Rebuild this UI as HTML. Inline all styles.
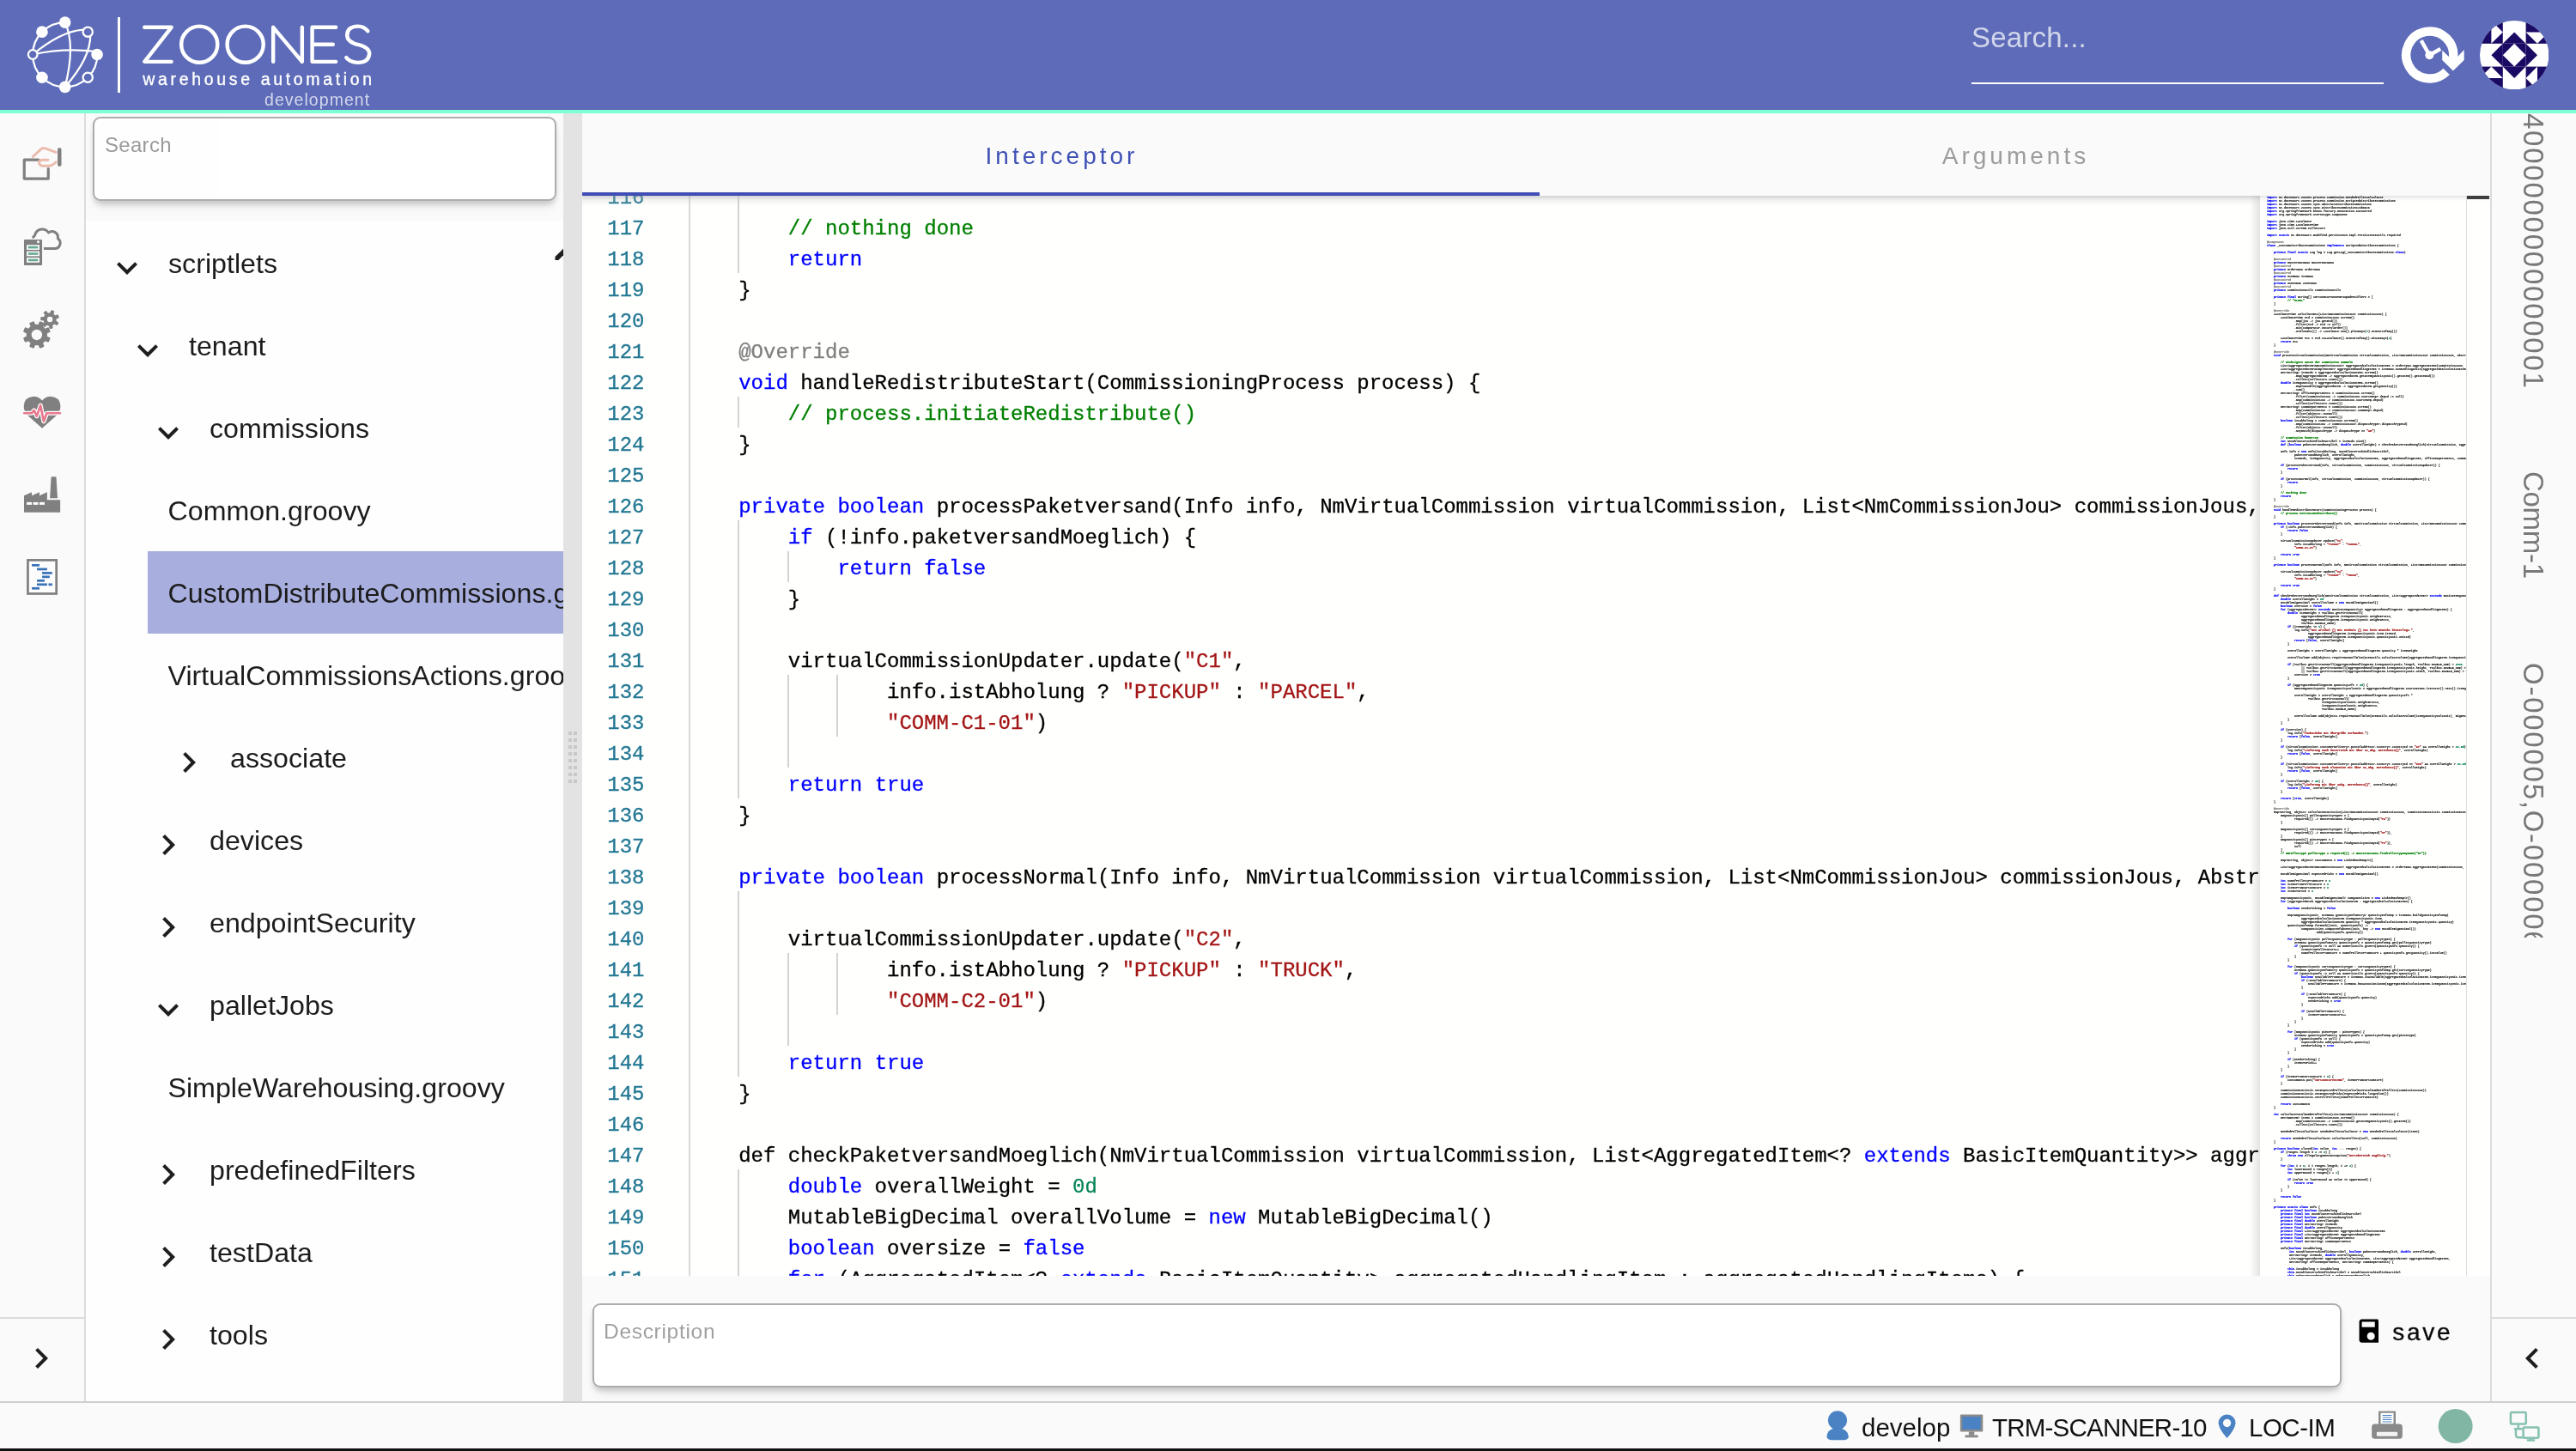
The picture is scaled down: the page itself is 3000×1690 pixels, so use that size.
<!DOCTYPE html>
<html><head><meta charset="utf-8"><title>Zoones</title>
<style>
*{box-sizing:border-box;margin:0;padding:0}
html,body{width:3000px;height:1690px;overflow:hidden;background:#fafafa;font-family:"Liberation Sans",sans-serif}
.abs{position:absolute}
#root{position:absolute;left:0;top:0;width:3000px;height:1690px;overflow:hidden;opacity:.9999;will-change:transform}
#hdr{position:absolute;left:0;top:0;width:3000px;height:128px;background:#5d6bb8}
#teal{position:absolute;left:0;top:128px;width:3000px;height:4px;background:#7fffd4}
#iconbar{position:absolute;left:0;top:132px;width:100px;height:1500px;background:#fafafa;border-right:2px solid #dcdcdc}
#treepane{position:absolute;left:100px;top:132px;width:556px;height:1500px;background:#fafafa;overflow:hidden}
#treewhite{position:absolute;left:0;top:125px;width:556px;height:1375px;background:#fefefe}
#tsearch{position:absolute;left:8px;top:4px;width:540px;height:98px;background:#fff;border:2px solid #adadad;border-radius:9px;box-shadow:0 4px 5px rgba(0,0,0,.10),0 9px 12px -4px rgba(0,0,0,.13)}
#tsearch span{position:absolute;left:12px;top:17px;font-size:24px;color:#9a9a9a;letter-spacing:.3px}
.trow{position:absolute;height:96px;width:700px}
.trow.leaf.sel{background:#a8afde}
.tt{position:absolute;top:25px;font-size:32.2px;line-height:48px;color:#1c1c1c;white-space:nowrap}
.chev{position:absolute;top:30px;width:48px;height:48px;fill:#1e1e1e}
#split{position:absolute;left:656px;top:132px;width:22px;height:1500px;background:#e3e3e3}
#split i{position:absolute;width:4px;height:4px;background:#c8c8c8}
#main{position:absolute;left:678px;top:132px;width:2222px;height:1500px;background:#fafafa;overflow:hidden}
#tabs{position:absolute;left:0;top:0;width:2222px;height:96px;background:#fafafb;box-shadow:0 2px 5px rgba(0,0,0,.13);z-index:3}
.tab{position:absolute;top:0;height:96px;width:1111px;text-align:center;font-size:28px;letter-spacing:4px;line-height:99px;padding-left:2px}
#tab1{left:0;width:1115px;color:#3f51b5;border-bottom:4px solid #3f4db5}
#tab2{left:1115px;width:1107px;color:#9c9c9c}
#editor{position:absolute;left:0;top:96px;width:2222px;height:1258px;background:#fffffe;overflow:hidden}
.ln{position:absolute;left:0;width:72.5px;text-align:right;font:24px/36px "Liberation Mono",monospace;color:#237893;-webkit-text-stroke:.3px}
.cl{position:absolute;white-space:pre;font:24px/36px "Liberation Mono",monospace;color:#000;-webkit-text-stroke:.3px}
.k{color:#0000ff}.c{color:#008000}.s{color:#a31515}.a{color:#808080}.n{color:#098658}
.ig{position:absolute;width:2px;background:#d3d3d3}
#scrollshadow{position:absolute;left:0;top:0;width:1954px;height:12px;background:linear-gradient(to bottom,rgba(205,205,205,.4),rgba(221,221,221,0));z-index:2}
#gutline{position:absolute;left:124px;top:0;width:2px;height:1258px;background:#d9d9d9}
#minimap{position:absolute;left:1954px;top:0;width:240px;height:1258px;background:#fffffe;overflow:hidden}
#minimap p{position:absolute;white-space:pre;font:bold 3.333px/4px "Liberation Mono",monospace;color:#000;height:4px;margin:0;-webkit-text-stroke:.07px}
#minimap i{font-style:normal;-webkit-text-stroke:.2px}
#mmshadow{position:absolute;left:1942px;top:0;width:12px;height:1258px;background:linear-gradient(to right,rgba(0,0,0,0),rgba(0,0,0,.11))}
#vscroll{position:absolute;left:2194px;top:0;width:28px;height:1258px;background:#fffffe;border-left:1px solid #dedede}
#vscroll div{position:absolute;left:0;top:0;width:26px;height:4px;background:#424242}
#descwrap{position:absolute;left:0;top:1354px;width:2222px;height:146px;background:#fafafa}
#desc{position:absolute;left:12px;top:32px;width:2037px;height:98px;background:#fff;border:2px solid #adadad;border-radius:9px;box-shadow:0 4px 5px rgba(0,0,0,.10),0 9px 12px -4px rgba(0,0,0,.13)}
#desc span{position:absolute;left:11px;top:17px;font-size:24.5px;color:#a0a0a0;letter-spacing:.7px}
#save{position:absolute;left:2108.3px;top:49.5px;font-size:28px;letter-spacing:2.75px;color:#0a0a0a;-webkit-text-stroke:.35px #0a0a0a}
#saveic{position:absolute;left:2064.5px;top:45.7px;width:27.5px;height:36.4px;overflow:hidden;border-radius:0 7px 0 0}
#rightbar{position:absolute;left:2900px;top:132px;width:100px;height:1500px;background:#fafafa;border-left:2px solid #dcdcdc}
#footer{position:absolute;left:0;top:1632px;width:3000px;height:58px;background:#fafafa;border-top:2px solid #cfcfcf}
#botline{position:absolute;left:0;top:1687px;width:3000px;height:3px;background:#111}
</style></head><body><div id="root">
<div id="hdr"><svg class="abs" style="left:20px;top:10px" width="130" height="110" viewBox="0 0 1715 1451" fill="none" stroke="#fff" stroke-width="30" stroke-linecap="round">
<path d="M1231 708 A496 496 0 1 1 735 212"/>
<path d="M240 706 Q670 350 1010 325"/>
<path d="M240 706 Q700 600 1228 660"/>
<path d="M735 212 Q900 560 735 1205"/>
<path d="M1125 400 Q1130 760 735 1205"/>
<g fill="#fff" stroke="none"><circle cx="735" cy="212" r="90"/><circle cx="382" cy="358" r="90"/><circle cx="1228" cy="706" r="90"/><circle cx="382" cy="1058" r="90"/><circle cx="735" cy="1205" r="90"/></g>
<g fill="#5d6bb8" stroke="#fff" stroke-width="30"><circle cx="1085" cy="358" r="74"/><circle cx="240" cy="706" r="70"/><circle cx="1085" cy="1058" r="74"/></g>
</svg>
<div class="abs" style="left:137px;top:19.5px;width:3px;height:88.5px;background:#fff"></div>
<svg class="abs" style="left:150px;top:10px" width="300" height="120" viewBox="0 0 2576 1030" fill="none" stroke="#fff" stroke-width="38" stroke-linecap="round" stroke-linejoin="round">
<path d="M157 187 H426 L157 531 H426"/>
<circle cx="706" cy="358" r="181"/>
<circle cx="1165" cy="358" r="181"/>
<path d="M1444 531 V187 L1733 531 V187"/>
<path d="M2071 187 H1834 V531 H2071 M1834 358 H2042"/>
<path d="M2390 225 Q2350 175 2290 177 Q2185 180 2183 265 Q2183 335 2300 362 Q2405 390 2406 450 Q2400 540 2290 540 Q2210 535 2175 490"/>
</svg>
<div class="abs" id="wa">warehouse automation</div>
<div class="abs" id="dev">development</div>
<style>
#wa{left:166.3px;top:79.8px;font-size:19.5px;line-height:24px;color:#fff;letter-spacing:3.66px;white-space:nowrap;-webkit-text-stroke:.35px #fff}
#dev{left:308px;top:103.5px;font-size:19.5px;line-height:24px;color:rgba(255,255,255,.72);letter-spacing:1.05px;white-space:nowrap}
</style>
<div class="abs" style="left:2296px;top:24px;font-size:33px;line-height:40px;color:rgba(255,255,255,.72);letter-spacing:.2px">Search...</div>
<div class="abs" style="left:2295.5px;top:96px;width:480.5px;height:2px;background:#fff"></div>
<svg class="abs" style="left:2780px;top:10px" width="220" height="110" viewBox="0 0 2576 1288">
<path d="M809.7 859.7 A322 322 0 1 1 900.9 676.8" fill="none" stroke="#fff" stroke-width="122"/>
<polygon points="752,572 842,655 962,655 1050,562 1050,702 900,850 752,702" fill="#fff"/>
<circle cx="578" cy="635" r="58" fill="#fff"/>
<path d="M578 635 L465 435 M578 635 L728 548" stroke="#fff" stroke-width="52" fill="none"/>
</svg>
<svg class="abs" style="left:2887.7px;top:23.6px" width="80.4" height="80.4" viewBox="0 0 3 3">
<defs><clipPath id="avc"><circle cx="1.5" cy="1.5" r="1.5"/></clipPath></defs>
<g clip-path="url(#avc)">
<rect width="3" height="3" fill="#fff"/>
<g fill="#1a0a63">
<rect x="0" y="0" width="1" height="1"/><rect x="2" y="0" width="1" height="1"/><rect x="0" y="2" width="1" height="1"/><rect x="2" y="2" width="1" height="1"/>
<rect x="1" y="1" width="1" height="1"/>
<polygon points="1,1 1.5,.5 2,1"/><polygon points="1,2 1.5,2.5 2,2"/><polygon points="1,1 .5,1.5 1,2"/><polygon points="2,1 2.5,1.5 2,2"/>
</g>
<g fill="#fff">
<polygon points="1.5,1 2,1.5 1.5,2 1,1.5"/>
<polygon points=".5,0 1,.5 .5,1"/><polygon points="2,.5 3,.5 2.5,1"/><polygon points="2.5,2 2.5,3 2,2.5"/><polygon points="0,2.5 1,2.5 .5,2"/>
</g>
</g>
</svg>
</div>
<div id="teal"></div>
<div id="iconbar"><svg class="abs" style="left:10px;top:18px" width="80" height="180" viewBox="0 0 645 1451" fill="none">
<path d="M280 292 H147 V468 H373 V375" stroke="#808080" stroke-width="26" stroke-linejoin="round" stroke-linecap="round"/>
<rect x="460" y="180" width="36" height="172" rx="14" fill="#808080"/>
<path d="M228 262 L305 190 Q325 178 345 184 L445 220" stroke="#ebbbae" stroke-width="24" stroke-linecap="round" stroke-linejoin="round"/>
<path d="M370 292 H315 Q285 295 287 322 Q292 348 330 348 H380 Q410 345 445 312" stroke="#ebbbae" stroke-width="24" stroke-linecap="round" stroke-linejoin="round"/>
<rect x="145" y="1040" width="170" height="242" rx="6" fill="#808080"/>
<circle cx="278" cy="1063" r="12" fill="#fff"/>
<g fill="#fff"><rect x="170" y="1090" width="120" height="46"/><rect x="170" y="1150" width="120" height="46"/><rect x="170" y="1210" width="120" height="46"/></g>
<g fill="#6aab97"><rect x="184" y="1102" width="93" height="22"/><rect x="184" y="1162" width="93" height="22"/><rect x="184" y="1222" width="93" height="22"/></g>
<path d="M222 1022 Q245 1015 250 990 A70 70 0 0 1 375 975 A55 55 0 0 1 462 1030 A52 52 0 0 1 432 1125 H330" stroke="#808080" stroke-width="24" stroke-linejoin="round"/>
</svg>
<svg class="abs" style="left:10px;top:218px" width="80" height="180" viewBox="0 0 645 1451">
<g fill="#808080">
<g transform="translate(265 322) rotate(22.5)">
<circle r="98"/>
<rect x="-24" y="-130" width="48" height="60" rx="10" transform="rotate(0)"/><rect x="-24" y="-130" width="48" height="60" rx="10" transform="rotate(45)"/><rect x="-24" y="-130" width="48" height="60" rx="10" transform="rotate(90)"/><rect x="-24" y="-130" width="48" height="60" rx="10" transform="rotate(135)"/><rect x="-24" y="-130" width="48" height="60" rx="10" transform="rotate(180)"/><rect x="-24" y="-130" width="48" height="60" rx="10" transform="rotate(225)"/><rect x="-24" y="-130" width="48" height="60" rx="10" transform="rotate(270)"/><rect x="-24" y="-130" width="48" height="60" rx="10" transform="rotate(315)"/>
</g>
<g transform="translate(388 177) rotate(18)">
<circle r="62"/>
<rect x="-17" y="-88" width="34" height="40" rx="8" transform="rotate(0.0)"/><rect x="-17" y="-88" width="34" height="40" rx="8" transform="rotate(51.4)"/><rect x="-17" y="-88" width="34" height="40" rx="8" transform="rotate(102.9)"/><rect x="-17" y="-88" width="34" height="40" rx="8" transform="rotate(154.3)"/><rect x="-17" y="-88" width="34" height="40" rx="8" transform="rotate(205.7)"/><rect x="-17" y="-88" width="34" height="40" rx="8" transform="rotate(257.1)"/><rect x="-17" y="-88" width="34" height="40" rx="8" transform="rotate(308.6)"/>
</g>
</g>
<circle cx="265" cy="322" r="50" fill="#fafafa"/><circle cx="388" cy="177" r="26" fill="#fafafa"/>
<path d="M315 1200 L185 1085 Q140 1040 143 985 Q150 905 235 900 Q285 900 315 940 Q345 900 395 900 Q480 905 487 985 Q490 1040 445 1085 Z" fill="#808080"/>
<path d="M146 1058 H215 L240 1032 L265 1085 L300 985 L330 1135 L358 1058 H484" stroke="#fff" stroke-width="42" fill="none" stroke-linejoin="round" stroke-linecap="round"/>
<path d="M146 1058 H215 L240 1032 L265 1085 L300 985 L330 1135 L358 1058 H484" stroke="#e8798f" stroke-width="22" fill="none" stroke-linejoin="round" stroke-linecap="round"/>
</svg>
<svg class="abs" style="left:10px;top:408px" width="80" height="180" viewBox="0 0 645 1451">
<polygon points="145,458 145,300 218,268 218,300 290,268 290,300 362,268 362,340 485,340 485,458" fill="#808080"/>
<polygon points="400,122 447,122 460,325 388,325" fill="#808080"/>
<g fill="#fff"><rect x="170" y="362" width="48" height="24"/><rect x="230" y="362" width="48" height="24"/><rect x="290" y="362" width="48" height="24"/></g>
<rect x="181" y="906" width="268" height="315" fill="#fdfdfd" stroke="#808080" stroke-width="22"/>
<g fill="#3b73b9"><rect x="218" y="943" width="72" height="22"/><rect x="266" y="980" width="96" height="22"/><rect x="315" y="1016" width="95" height="22"/><rect x="315" y="1052" width="71" height="22"/><rect x="266" y="1088" width="72" height="22"/><rect x="266" y="1124" width="96" height="22"/><rect x="375" y="1124" width="35" height="22"/><rect x="218" y="1160" width="72" height="22"/></g>
</svg>
<div class="abs" style="left:0;top:1402px;width:98px;height:2px;background:#dcdcdc"></div>
<svg class="abs" style="left:24px;top:1426px;width:48px;height:48px;fill:#1e1e1e" viewBox="0 0 24 24"><path d="M8.59 16.59L13.17 12 8.59 7.41 10 6l6 6-6 6z"/></svg>
</div>
<div id="treepane"><div id="treewhite"></div>
<div id="tsearch"><span>Search</span></div>
<div class="trow" style="top:126px;left:0"><svg class="chev" style="left:24.2px" viewBox="0 0 24 24"><path d="M16.59 8.59L12 13.17 7.41 8.59 6 10l6 6 6-6z"/></svg><span class="tt" style="left:96.0px">scriptlets</span></div>
<div class="trow" style="top:222px;left:0"><svg class="chev" style="left:48.2px" viewBox="0 0 24 24"><path d="M16.59 8.59L12 13.17 7.41 8.59 6 10l6 6 6-6z"/></svg><span class="tt" style="left:120.0px">tenant</span></div>
<div class="trow" style="top:318px;left:0"><svg class="chev" style="left:72.2px" viewBox="0 0 24 24"><path d="M16.59 8.59L12 13.17 7.41 8.59 6 10l6 6 6-6z"/></svg><span class="tt" style="left:144.0px">commissions</span></div>
<div class="trow leaf" style="top:414px;left:72px"><span class="tt" style="left:23.5px">Common.groovy</span></div>
<div class="trow leaf sel" style="top:510px;left:72px"><span class="tt" style="left:23.5px">CustomDistributeCommissions.groovy</span></div>
<div class="trow leaf" style="top:606px;left:72px"><span class="tt" style="left:23.5px">VirtualCommissionsActions.groovy</span></div>
<div class="trow" style="top:702px;left:0"><svg class="chev" style="left:96.2px" viewBox="0 0 24 24"><path d="M8.59 16.59L13.17 12 8.59 7.41 10 6l6 6-6 6z"/></svg><span class="tt" style="left:168.0px">associate</span></div>
<div class="trow" style="top:798px;left:0"><svg class="chev" style="left:72.2px" viewBox="0 0 24 24"><path d="M8.59 16.59L13.17 12 8.59 7.41 10 6l6 6-6 6z"/></svg><span class="tt" style="left:144.0px">devices</span></div>
<div class="trow" style="top:894px;left:0"><svg class="chev" style="left:72.2px" viewBox="0 0 24 24"><path d="M8.59 16.59L13.17 12 8.59 7.41 10 6l6 6-6 6z"/></svg><span class="tt" style="left:144.0px">endpointSecurity</span></div>
<div class="trow" style="top:990px;left:0"><svg class="chev" style="left:72.2px" viewBox="0 0 24 24"><path d="M16.59 8.59L12 13.17 7.41 8.59 6 10l6 6 6-6z"/></svg><span class="tt" style="left:144.0px">palletJobs</span></div>
<div class="trow leaf" style="top:1086px;left:72px"><span class="tt" style="left:23.5px">SimpleWarehousing.groovy</span></div>
<div class="trow" style="top:1182px;left:0"><svg class="chev" style="left:72.2px" viewBox="0 0 24 24"><path d="M8.59 16.59L13.17 12 8.59 7.41 10 6l6 6-6 6z"/></svg><span class="tt" style="left:144.0px">predefinedFilters</span></div>
<div class="trow" style="top:1278px;left:0"><svg class="chev" style="left:72.2px" viewBox="0 0 24 24"><path d="M8.59 16.59L13.17 12 8.59 7.41 10 6l6 6-6 6z"/></svg><span class="tt" style="left:144.0px">testData</span></div>
<div class="trow" style="top:1374px;left:0"><svg class="chev" style="left:72.2px" viewBox="0 0 24 24"><path d="M8.59 16.59L13.17 12 8.59 7.41 10 6l6 6-6 6z"/></svg><span class="tt" style="left:144.0px">tools</span></div>
<svg class="abs" style="left:540px;top:150px" width="16" height="24" viewBox="540 150 16 24"><polygon points="546.5,170.9 546.5,166.9 556,157.8 556,165.3 550.4,170.9" fill="#1e1e1e"/></svg>
</div>
<div id="split"><i style="left:6px;top:720px"></i><i style="left:12px;top:720px"></i><i style="left:6px;top:728px"></i><i style="left:12px;top:728px"></i><i style="left:6px;top:736px"></i><i style="left:12px;top:736px"></i><i style="left:6px;top:744px"></i><i style="left:12px;top:744px"></i><i style="left:6px;top:752px"></i><i style="left:12px;top:752px"></i><i style="left:6px;top:760px"></i><i style="left:12px;top:760px"></i><i style="left:6px;top:768px"></i><i style="left:12px;top:768px"></i><i style="left:6px;top:776px"></i><i style="left:12px;top:776px"></i></div>
<div id="main">
 <div id="tabs"><div class="tab" id="tab1">Interceptor</div><div class="tab" id="tab2">Arguments</div></div>
 <div id="editor">
  <div id="gutline"></div><div id="scrollshadow"></div>
<div class="ln" style="top:-15.0px">116</div>
<div class="ln" style="top:21.0px">117</div>
<div class="cl" style="top:21.0px;left:239.8px"><span class="c">// nothing done</span></div>
<div class="ln" style="top:57.0px">118</div>
<div class="cl" style="top:57.0px;left:239.8px"><span class="k">return</span></div>
<div class="ln" style="top:93.0px">119</div>
<div class="cl" style="top:93.0px;left:182.2px">}</div>
<div class="ln" style="top:129.0px">120</div>
<div class="ln" style="top:165.0px">121</div>
<div class="cl" style="top:165.0px;left:182.2px"><span class="a">@Override</span></div>
<div class="ln" style="top:201.0px">122</div>
<div class="cl" style="top:201.0px;left:182.2px"><span class="k">void</span> handleRedistributeStart(CommissioningProcess process) {</div>
<div class="ln" style="top:237.0px">123</div>
<div class="cl" style="top:237.0px;left:239.8px"><span class="c">// process.initiateRedistribute()</span></div>
<div class="ln" style="top:273.0px">124</div>
<div class="cl" style="top:273.0px;left:182.2px">}</div>
<div class="ln" style="top:309.0px">125</div>
<div class="ln" style="top:345.0px">126</div>
<div class="cl" style="top:345.0px;left:182.2px"><span class="k">private</span> <span class="k">boolean</span> processPaketversand(Info info, NmVirtualCommission virtualCommission, List&lt;NmCommissionJou&gt; commissionJous, AbstractDistributeCommissions</div>
<div class="ln" style="top:381.0px">127</div>
<div class="cl" style="top:381.0px;left:239.8px"><span class="k">if</span> (!info.paketversandMoeglich) {</div>
<div class="ln" style="top:417.0px">128</div>
<div class="cl" style="top:417.0px;left:297.4px"><span class="k">return</span> <span class="k">false</span></div>
<div class="ln" style="top:453.0px">129</div>
<div class="cl" style="top:453.0px;left:239.8px">}</div>
<div class="ln" style="top:489.0px">130</div>
<div class="ln" style="top:525.0px">131</div>
<div class="cl" style="top:525.0px;left:239.8px">virtualCommissionUpdater.update(<span class="s">"C1"</span>,</div>
<div class="ln" style="top:561.0px">132</div>
<div class="cl" style="top:561.0px;left:355.0px">info.istAbholung ? <span class="s">"PICKUP"</span> : <span class="s">"PARCEL"</span>,</div>
<div class="ln" style="top:597.0px">133</div>
<div class="cl" style="top:597.0px;left:355.0px"><span class="s">"COMM-C1-01"</span>)</div>
<div class="ln" style="top:633.0px">134</div>
<div class="ln" style="top:669.0px">135</div>
<div class="cl" style="top:669.0px;left:239.8px"><span class="k">return</span> <span class="k">true</span></div>
<div class="ln" style="top:705.0px">136</div>
<div class="cl" style="top:705.0px;left:182.2px">}</div>
<div class="ln" style="top:741.0px">137</div>
<div class="ln" style="top:777.0px">138</div>
<div class="cl" style="top:777.0px;left:182.2px"><span class="k">private</span> <span class="k">boolean</span> processNormal(Info info, NmVirtualCommission virtualCommission, List&lt;NmCommissionJou&gt; commissionJous, AbstractDistributeCommissions</div>
<div class="ln" style="top:813.0px">139</div>
<div class="ln" style="top:849.0px">140</div>
<div class="cl" style="top:849.0px;left:239.8px">virtualCommissionUpdater.update(<span class="s">"C2"</span>,</div>
<div class="ln" style="top:885.0px">141</div>
<div class="cl" style="top:885.0px;left:355.0px">info.istAbholung ? <span class="s">"PICKUP"</span> : <span class="s">"TRUCK"</span>,</div>
<div class="ln" style="top:921.0px">142</div>
<div class="cl" style="top:921.0px;left:355.0px"><span class="s">"COMM-C2-01"</span>)</div>
<div class="ln" style="top:957.0px">143</div>
<div class="ln" style="top:993.0px">144</div>
<div class="cl" style="top:993.0px;left:239.8px"><span class="k">return</span> <span class="k">true</span></div>
<div class="ln" style="top:1029.0px">145</div>
<div class="cl" style="top:1029.0px;left:182.2px">}</div>
<div class="ln" style="top:1065.0px">146</div>
<div class="ln" style="top:1101.0px">147</div>
<div class="cl" style="top:1101.0px;left:182.2px">def checkPaketversandMoeglich(NmVirtualCommission virtualCommission, List&lt;AggregatedItem&lt;? <span class="k">extends</span> BasicItemQuantity&gt;&gt; aggregatedHandlingItems</div>
<div class="ln" style="top:1137.0px">148</div>
<div class="cl" style="top:1137.0px;left:239.8px"><span class="k">double</span> overallWeight = <span class="n">0d</span></div>
<div class="ln" style="top:1173.0px">149</div>
<div class="cl" style="top:1173.0px;left:239.8px">MutableBigDecimal overallVolume = <span class="k">new</span> MutableBigDecimal()</div>
<div class="ln" style="top:1209.0px">150</div>
<div class="cl" style="top:1209.0px;left:239.8px"><span class="k">boolean</span> oversize = <span class="k">false</span></div>
<div class="ln" style="top:1245.0px">151</div>
<div class="cl" style="top:1245.0px;left:239.8px"><span class="k">for</span> (AggregatedItem&lt;? <span class="k">extends</span> BasicItemQuantity&gt; aggregatedHandlingItem : aggregatedHandlingItems) {</div>
<div class="ig" style="left:181.2px;top:-17.6px;height:108.0px"></div>
<div class="ig" style="left:181.2px;top:234.4px;height:36.0px"></div>
<div class="ig" style="left:181.2px;top:378.4px;height:324.0px"></div>
<div class="ig" style="left:238.8px;top:414.4px;height:36.0px"></div>
<div class="ig" style="left:238.8px;top:558.4px;height:108.0px"></div>
<div class="ig" style="left:296.4px;top:558.4px;height:72.0px"></div>
<div class="ig" style="left:181.2px;top:810.4px;height:216.0px"></div>
<div class="ig" style="left:238.8px;top:882.4px;height:108.0px"></div>
<div class="ig" style="left:296.4px;top:882.4px;height:72.0px"></div>
<div class="ig" style="left:181.2px;top:1134.4px;height:144.0px"></div>
  <div id="minimap"><p style="top:0px;left:8px"><i class="k">import</i> at.datenwort.zoones.process.commission.NeededPalletCalculator</p>
<p style="top:4px;left:8px"><i class="k">import</i> at.datenwort.zoones.process.commission.ScriptedDistributeCommissions</p>
<p style="top:8px;left:8px"><i class="k">import</i> at.datenwort.zoones.sync.AbstractDistributeCommissions</p>
<p style="top:12px;left:8px"><i class="k">import</i> at.datenwort.zoones.sync.DistributeCommissionsJobData</p>
<p style="top:16px;left:8px"><i class="k">import</i> org.springframework.beans.factory.annotation.Autowired</p>
<p style="top:20px;left:8px"><i class="k">import</i> org.springframework.stereotype.Component</p>
<p style="top:28px;left:8px"><i class="k">import</i> java.time.LocalDate</p>
<p style="top:32px;left:8px"><i class="k">import</i> java.time.LocalDateTime</p>
<p style="top:36px;left:8px"><i class="k">import</i> java.util.stream.Collectors</p>
<p style="top:44px;left:8px"><i class="k">import</i> <i class="k">static</i> at.datenwort.modified.persistence.impl.PersistenceUtils.required</p>
<p style="top:52px;left:8px"><i class="a">@Component</i></p>
<p style="top:56px;left:8px"><i class="k">class</i> _CustomDistributeCommissions <i class="k">implements</i> ScriptedDistributeCommissions {</p>
<p style="top:64px;left:16px"><i class="k">private</i> <i class="k">final</i> <i class="k">static</i> Log log = Log.getLog(_CustomDistributeCommissions.<i class="k">class</i>)</p>
<p style="top:72px;left:16px"><i class="a">@Autowired</i></p>
<p style="top:76px;left:16px"><i class="k">private</i> MasterDataDao masterDataDao</p>
<p style="top:80px;left:16px"><i class="a">@Autowired</i></p>
<p style="top:84px;left:16px"><i class="k">private</i> OrdersDao ordersDao</p>
<p style="top:88px;left:16px"><i class="a">@Autowired</i></p>
<p style="top:92px;left:16px"><i class="k">private</i> ItemDao itemDao</p>
<p style="top:96px;left:16px"><i class="a">@Autowired</i></p>
<p style="top:100px;left:16px"><i class="k">private</i> ZonesDao zonesDao</p>
<p style="top:104px;left:16px"><i class="a">@Autowired</i></p>
<p style="top:108px;left:16px"><i class="k">private</i> CommissionUtils commissionUtils</p>
<p style="top:116px;left:16px"><i class="k">private</i> <i class="k">final</i> String[] cartonStoreZoneGroupIdentifiers = [</p>
<p style="top:120px;left:32px"><i class="c">// "KLWKL"</i></p>
<p style="top:124px;left:16px">]</p>
<p style="top:132px;left:16px"><i class="a">@Override</i></p>
<p style="top:136px;left:16px">LocalDateTime calculateEtc(List&lt;NmCommissionJou&gt; commissionJous) {</p>
<p style="top:140px;left:24px">LocalDateTime etd = commissionJous.stream()</p>
<p style="top:144px;left:40px">.map(jou -&gt; jou.getEtd())</p>
<p style="top:148px;left:40px">.filter(etd -&gt; etd != null)</p>
<p style="top:152px;left:40px">.min(Comparator.naturalOrder())</p>
<p style="top:156px;left:40px">.orElseGet(() -&gt; LocalDate.now().plusDays(<i class="n">7</i>).atStartOfDay())</p>
<p style="top:164px;left:24px">LocalDateTime etc = etd.toLocalDate().atStartOfDay().minusDays(<i class="n">2</i>)</p>
<p style="top:168px;left:24px"><i class="k">return</i> etc</p>
<p style="top:172px;left:16px">}</p>
<p style="top:180px;left:16px"><i class="a">@Override</i></p>
<p style="top:184px;left:16px"><i class="k">void</i> processVirtualCommission(NmVirtualCommission virtualCommission, List&lt;NmCommissionJou&gt; commissionJous, Abstra</p>
<p style="top:192px;left:24px"><i class="c">// Wichtigste Daten der Commission sammeln</i></p>
<p style="top:196px;left:24px">List&lt;AggregatedItem&lt;NmCommissionJou&gt;&gt; aggregatedCalculationItems = ordersDao.aggregateItems(commissionJous, f</p>
<p style="top:200px;left:24px">List&lt;AggregatedItem&lt;SimpleItem&gt;&gt; aggregatedHandlingItems = itemDao.asHandlingUnits(aggregatedCalculationItems</p>
<p style="top:204px;left:24px">Set&lt;String&gt; itemCds = aggregatedCalculationItems.stream()</p>
<p style="top:208px;left:40px">.map(aggregatedItem -&gt; aggregatedItem.getItemQuantityUnit().getItem().getItemCd())</p>
<p style="top:212px;left:40px">.collect(Collectors.toSet())</p>
<p style="top:216px;left:24px"><i class="k">double</i> itemQuantity = aggregatedCalculationItems.stream()</p>
<p style="top:220px;left:40px">.mapToDouble(aggregatedItem -&gt; aggregatedItem.getQuantity())</p>
<p style="top:224px;left:40px">.sum()</p>
<p style="top:228px;left:24px">Set&lt;String&gt; officeDepartments = commissionJous.stream()</p>
<p style="top:232px;left:40px">.filter(commissionJou -&gt; commissionJou.sourceDep?.depCd != null)</p>
<p style="top:236px;left:40px">.map(commissionJou -&gt; commissionJou.sourceDep.depCd)</p>
<p style="top:240px;left:40px">.collect(Collectors.toSet())</p>
<p style="top:244px;left:24px">Set&lt;String&gt; commDepartments = commissionJous.stream()</p>
<p style="top:248px;left:40px">.map(commissionJou -&gt; commissionJou?.commDep?.depCd)</p>
<p style="top:252px;left:40px">.filter(Objects::nonNull)</p>
<p style="top:256px;left:40px">.collect(Collectors.toSet())</p>
<p style="top:260px;left:24px"><i class="k">boolean</i> istAbholung = commissionJous.stream()</p>
<p style="top:264px;left:40px">.map(commissionJou -&gt; commissionJou?.dispatchType?.dispatchTypeCd)</p>
<p style="top:268px;left:40px">.filter(Objects::nonNull)</p>
<p style="top:272px;left:40px">.anyMatch(dispatchType -&gt; dispatchType == <i class="s">"AB"</i>)</p>
<p style="top:280px;left:24px"><i class="c">// Commission bewerten</i></p>
<p style="top:284px;left:24px"><i class="k">int</i> anzahlUnterschiedlicheArtikel = itemCds.size()</p>
<p style="top:288px;left:24px"><i class="k">def</i> (<i class="k">boolean</i> paketversandMoeglich, <i class="k">double</i> overallWeight) = checkPaketversandMoeglich(virtualCommission, aggre</p>
<p style="top:296px;left:24px">Info info = <i class="k">new</i> Info(istAbholung, anzahlUnterschiedlicheArtikel,</p>
<p style="top:300px;left:40px">paketversandMoeglich, overallWeight,</p>
<p style="top:304px;left:40px">itemCds, itemQuantity, aggregatedCalculationItems, aggregatedHandlingItems, officeDepartments, commDe</p>
<p style="top:312px;left:24px"><i class="k">if</i> (processPaketversand(info, virtualCommission, commissionJous, virtualCommissionUpdater)) {</p>
<p style="top:316px;left:32px"><i class="k">return</i></p>
<p style="top:320px;left:24px">}</p>
<p style="top:328px;left:24px"><i class="k">if</i> (processNormal(info, virtualCommission, commissionJous, virtualCommissionUpdater)) {</p>
<p style="top:332px;left:32px"><i class="k">return</i></p>
<p style="top:336px;left:24px">}</p>
<p style="top:344px;left:24px"><i class="c">// nothing done</i></p>
<p style="top:348px;left:24px"><i class="k">return</i></p>
<p style="top:352px;left:16px">}</p>
<p style="top:360px;left:16px"><i class="a">@Override</i></p>
<p style="top:364px;left:16px"><i class="k">void</i> handleRedistributeStart(CommissioningProcess process) {</p>
<p style="top:368px;left:24px"><i class="c">// process.initiateRedistribute()</i></p>
<p style="top:372px;left:16px">}</p>
<p style="top:380px;left:16px"><i class="k">private</i> <i class="k">boolean</i> processPaketversand(Info info, NmVirtualCommission virtualCommission, List&lt;NmCommissionJou&gt; commi</p>
<p style="top:384px;left:24px"><i class="k">if</i> (!info.paketversandMoeglich) {</p>
<p style="top:388px;left:32px"><i class="k">return</i> <i class="k">false</i></p>
<p style="top:392px;left:24px">}</p>
<p style="top:400px;left:24px">virtualCommissionUpdater.update(<i class="s">"C1"</i>,</p>
<p style="top:404px;left:40px">info.istAbholung ? <i class="s">"PICKUP"</i> : <i class="s">"PARCEL"</i>,</p>
<p style="top:408px;left:40px"><i class="s">"COMM-C1-01"</i>)</p>
<p style="top:416px;left:24px"><i class="k">return</i> <i class="k">true</i></p>
<p style="top:420px;left:16px">}</p>
<p style="top:428px;left:16px"><i class="k">private</i> <i class="k">boolean</i> processNormal(Info info, NmVirtualCommission virtualCommission, List&lt;NmCommissionJou&gt; commissionJ</p>
<p style="top:436px;left:24px">virtualCommissionUpdater.update(<i class="s">"C2"</i>,</p>
<p style="top:440px;left:40px">info.istAbholung ? <i class="s">"PICKUP"</i> : <i class="s">"TRUCK"</i>,</p>
<p style="top:444px;left:40px"><i class="s">"COMM-C2-01"</i>)</p>
<p style="top:452px;left:24px"><i class="k">return</i> <i class="k">true</i></p>
<p style="top:456px;left:16px">}</p>
<p style="top:464px;left:16px"><i class="k">def</i> checkPaketversandMoeglich(NmVirtualCommission virtualCommission, List&lt;AggregatedItem&lt;? <i class="k">extends</i> BasicItemQuant</p>
<p style="top:468px;left:24px"><i class="k">double</i> overallWeight = <i class="n">0d</i></p>
<p style="top:472px;left:24px">MutableBigDecimal overallVolume = <i class="k">new</i> MutableBigDecimal()</p>
<p style="top:476px;left:24px"><i class="k">boolean</i> oversize = <i class="k">false</i></p>
<p style="top:480px;left:24px"><i class="k">for</i> (AggregatedItem&lt;? <i class="k">extends</i> BasicItemQuantity&gt; aggregatedHandlingItem : aggregatedHandlingItems) {</p>
<p style="top:484px;left:32px"><i class="k">double</i> itemWeight = Toolbox.getFirstNonNull(</p>
<p style="top:488px;left:48px">aggregatedHandlingItem.itemQuantityUnit.weightBrutto,</p>
<p style="top:492px;left:48px">aggregatedHandlingItem.itemQuantityUnit.weightNetto,</p>
<p style="top:496px;left:48px">Toolbox.DOUBLE_ZERO)</p>
<p style="top:500px;left:32px"><i class="k">if</i> (itemWeight &lt;= <i class="n">0</i>) {</p>
<p style="top:504px;left:40px">log.info(<i class="s">"Bei Artikel {} mit Einheit {} ist kein Gewicht hinterlegt."</i>,</p>
<p style="top:508px;left:56px">aggregatedHandlingItem.itemQuantityUnit.item.itemCd,</p>
<p style="top:512px;left:56px">aggregatedHandlingItem.itemQuantityUnit.quantityUnit.unitCd)</p>
<p style="top:516px;left:40px"><i class="k">return</i> [<i class="k">false</i>, overallWeight]</p>
<p style="top:520px;left:32px">}</p>
<p style="top:528px;left:32px">overallWeight = overallWeight + aggregatedHandlingItem.quantity * itemWeight</p>
<p style="top:536px;left:32px">overallVolume.add(Objects.requireNonNullElse(ItemUtils.calculateVolume(aggregatedHandlingItem.itemQuantit</p>
<p style="top:544px;left:32px"><i class="k">if</i> (Toolbox.getFirstNonNull(aggregatedHandlingItem.itemQuantityUnit.length, Toolbox.DOUBLE_ONE) &gt; <i class="n">2000</i></p>
<p style="top:548px;left:48px">|| Toolbox.getFirstNonNull(aggregatedHandlingItem.itemQuantityUnit.height, Toolbox.DOUBLE_ONE) &gt; </p>
<p style="top:552px;left:48px">|| Toolbox.getFirstNonNull(aggregatedHandlingItem.itemQuantityUnit.width, Toolbox.DOUBLE_ONE) &gt; <i class="n">8</i></p>
<p style="top:556px;left:40px">oversize = <i class="k">true</i></p>
<p style="top:560px;left:32px">}</p>
<p style="top:568px;left:32px"><i class="k">if</i> (aggregatedHandlingItem.quantityLeft &gt; <i class="n">0d</i>) {</p>
<p style="top:572px;left:40px">NmItemQuantityUnit itemQuantityCalcUnit = aggregatedHandlingItem.sourceItems.iterator().next().itemQu</p>
<p style="top:580px;left:40px">overallWeight = overallWeight + aggregatedHandlingItem.quantityLeft *</p>
<p style="top:584px;left:56px">Toolbox.getFirstNonNull(</p>
<p style="top:588px;left:72px">itemQuantityCalcUnit.weightBrutto,</p>
<p style="top:592px;left:72px">itemQuantityCalcUnit.weightNetto,</p>
<p style="top:596px;left:72px">Toolbox.DOUBLE_ZERO)</p>
<p style="top:604px;left:40px">overallVolume.add(Objects.requireNonNullElse(ItemUtils.calculateVolume(itemQuantityCalcUnit), BigDeci</p>
<p style="top:608px;left:32px">}</p>
<p style="top:612px;left:24px">}</p>
<p style="top:620px;left:24px"><i class="k">if</i> (oversize) {</p>
<p style="top:624px;left:32px">log.info(<i class="s">"Packstücke mit Übergröße vorhanden."</i>)</p>
<p style="top:628px;left:32px"><i class="k">return</i> [<i class="k">false</i>, overallWeight]</p>
<p style="top:632px;left:24px">}</p>
<p style="top:640px;left:24px"><i class="k">if</i> (virtualCommission?.customerDelivery?.postalAddress?.country?.countryCd == <i class="s">"AT"</i> &amp;&amp; overallWeight &gt; <i class="n">31.5d</i>) </p>
<p style="top:644px;left:32px">log.info(<i class="s">"Lieferung nach Österreich mit über 31,5kg. Berechnet={}"</i>, overallWeight)</p>
<p style="top:648px;left:32px"><i class="k">return</i> [<i class="k">false</i>, overallWeight]</p>
<p style="top:652px;left:24px">}</p>
<p style="top:660px;left:24px"><i class="k">if</i> (virtualCommission?.customerDelivery?.postalAddress?.country?.countryCd == <i class="s">"SVN"</i> &amp;&amp; overallWeight &gt; <i class="n">31.5d</i>)</p>
<p style="top:664px;left:32px">log.info(<i class="s">"Lieferung nach Slowenien mit über 31,5kg. Berechnet={}"</i>, overallWeight)</p>
<p style="top:668px;left:32px"><i class="k">return</i> [<i class="k">false</i>, overallWeight]</p>
<p style="top:672px;left:24px">}</p>
<p style="top:680px;left:24px"><i class="k">if</i> (overallWeight &gt; <i class="n">40</i>) {</p>
<p style="top:684px;left:32px">log.info(<i class="s">"Lieferung mit über 40kg. Berechnet={}"</i>, overallWeight)</p>
<p style="top:688px;left:32px"><i class="k">return</i> [<i class="k">false</i>, overallWeight]</p>
<p style="top:692px;left:24px">}</p>
<p style="top:700px;left:24px"><i class="k">return</i> [<i class="k">true</i>, overallWeight]</p>
<p style="top:704px;left:16px">}</p>
<p style="top:712px;left:16px"><i class="a">@Override</i></p>
<p style="top:716px;left:16px">Map&lt;String, Object&gt; calculateStatistics(List&lt;NmCommissionJou&gt; commissionJous, CommissionStatistic commissionStati</p>
<p style="top:720px;left:24px">NmQuantityUnit[] palletQuantityTypes = [</p>
<p style="top:724px;left:40px">required(() -&gt; masterDataDao.findQuantityUnitByCd(<i class="s">"PA"</i>))</p>
<p style="top:728px;left:24px">]</p>
<p style="top:736px;left:24px">NmQuantityUnit[] cartonQuantityTypes = [</p>
<p style="top:740px;left:40px">required(() -&gt; masterDataDao.findQuantityUnitByCd(<i class="s">"CT"</i>)),</p>
<p style="top:744px;left:24px">]</p>
<p style="top:748px;left:24px">NmQuantityUnit[] pieceTypes = [</p>
<p style="top:752px;left:40px">required(() -&gt; masterDataDao.findQuantityUnitByCd(<i class="s">"PC"</i>)),</p>
<p style="top:756px;left:40px">null</p>
<p style="top:760px;left:24px">]</p>
<p style="top:764px;left:24px"><i class="c">// NmPalletType palletType = required(() -&gt; masterDataDao.findPalletTypeByName("EP"))</i></p>
<p style="top:772px;left:24px">Map&lt;String, Object&gt; customData = <i class="k">new</i> LinkedHashMap&lt;&gt;()</p>
<p style="top:780px;left:24px">List&lt;AggregatedItem&lt;NmCommissionJou&gt;&gt; aggregatedCalculationItems = ordersDao.aggregateItems(commissionJous, f</p>
<p style="top:788px;left:24px">MutableBigDecimal expectedPicks = <i class="k">new</i> MutableBigDecimal()</p>
<p style="top:796px;left:24px"><i class="k">int</i> numOfPalletsFromStore = <i class="n">0</i></p>
<p style="top:800px;left:24px"><i class="k">int</i> itemsFromPalletStore = <i class="n">0</i></p>
<p style="top:804px;left:24px"><i class="k">int</i> itemsFromCartonStore = <i class="n">0</i></p>
<p style="top:808px;left:24px"><i class="k">int</i> itemsToPick = <i class="n">0</i></p>
<p style="top:816px;left:24px">Map&lt;NmQuantityUnit, MutableBigDecimal&gt; sumQuantities = <i class="k">new</i> LinkedHashMap&lt;&gt;()</p>
<p style="top:820px;left:24px"><i class="k">for</i> (AggregatedItem aggregatedCalculationItem : aggregatedCalculationItems) {</p>
<p style="top:828px;left:32px"><i class="k">boolean</i> needsPicking = <i class="k">false</i></p>
<p style="top:836px;left:32px">Map&lt;NmQuantityUnit, ItemDao.QuantityInfoEntry&gt; quantityInfoMap = itemDao.buildQuantityInfoMap(</p>
<p style="top:840px;left:48px">aggregatedCalculationItem.itemQuantityUnit.item,</p>
<p style="top:844px;left:48px">aggregatedCalculationItem.quantity * aggregatedCalculationItem.itemQuantityUnit.quantity)</p>
<p style="top:848px;left:32px">quantityInfoMap.forEach((unit, quantityInfo) -&gt;</p>
<p style="top:852px;left:48px">sumQuantities.computeIfAbsent(unit, key -&gt; <i class="k">new</i> MutableBigDecimal())</p>
<p style="top:856px;left:64px">.add(quantityInfo.quantity))</p>
<p style="top:864px;left:32px"><i class="k">for</i> (NmQuantityUnit palletQuantityType : palletQuantityTypes) {</p>
<p style="top:868px;left:40px">ItemDao.QuantityInfoEntry quantityInfo = quantityInfoMap.get(palletQuantityType)</p>
<p style="top:872px;left:40px"><i class="k">if</i> (quantityInfo != null &amp;&amp; NumericUtils.gtZero(quantityInfo.quantity)) {</p>
<p style="top:876px;left:48px">itemsFromPalletStore++</p>
<p style="top:880px;left:48px">numOfPalletsFromStore = numOfPalletsFromStore + quantityInfo.getQuantity().intValue()</p>
<p style="top:884px;left:40px">}</p>
<p style="top:888px;left:32px">}</p>
<p style="top:896px;left:32px"><i class="k">for</i> (NmQuantityUnit cartonQuantityType : cartonQuantityTypes) {</p>
<p style="top:900px;left:40px">ItemDao.QuantityInfoEntry quantityInfo = quantityInfoMap.get(cartonQuantityType)</p>
<p style="top:904px;left:40px"><i class="k">if</i> (quantityInfo != null &amp;&amp; NumericUtils.gtZero(quantityInfo.quantity)) {</p>
<p style="top:908px;left:48px"><i class="k">boolean</i> availableFromStore = itemDao.isAvailable(aggregatedCalculationItem.itemQuantityUnit.item,</p>
<p style="top:912px;left:48px"><i class="k">if</i> (!availableFromStore) {</p>
<p style="top:916px;left:56px">availableFromStore = itemDao.hasAssociationOn(aggregatedCalculationItem.itemQuantityUnit.item</p>
<p style="top:920px;left:48px">}</p>
<p style="top:928px;left:48px"><i class="k">if</i> (!availableFromStore) {</p>
<p style="top:932px;left:56px">expectedPicks.add(quantityInfo.quantity)</p>
<p style="top:936px;left:56px">needsPicking = <i class="k">true</i></p>
<p style="top:940px;left:48px">}</p>
<p style="top:948px;left:48px"><i class="k">if</i> (availableFromStore) {</p>
<p style="top:952px;left:56px">itemsFromCartonStore++</p>
<p style="top:956px;left:48px">}</p>
<p style="top:960px;left:40px">}</p>
<p style="top:964px;left:32px">}</p>
<p style="top:972px;left:32px"><i class="k">for</i> (NmQuantityUnit pieceType : pieceTypes) {</p>
<p style="top:976px;left:40px">ItemDao.QuantityInfoEntry quantityInfo = quantityInfoMap.get(pieceType)</p>
<p style="top:980px;left:40px"><i class="k">if</i> (quantityInfo != null) {</p>
<p style="top:984px;left:48px">expectedPicks.add(quantityInfo.quantity)</p>
<p style="top:988px;left:48px">needsPicking = <i class="k">true</i></p>
<p style="top:992px;left:40px">}</p>
<p style="top:996px;left:32px">}</p>
<p style="top:1004px;left:32px"><i class="k">if</i> (needsPicking) {</p>
<p style="top:1008px;left:40px">itemsToPick++</p>
<p style="top:1012px;left:32px">}</p>
<p style="top:1016px;left:24px">}</p>
<p style="top:1024px;left:24px"><i class="k">if</i> (itemsFromCartonStore &gt; <i class="n">0</i>) {</p>
<p style="top:1028px;left:32px">customData.put(<i class="s">"cartonStoreItems"</i>, itemsFromCartonStore)</p>
<p style="top:1032px;left:24px">}</p>
<p style="top:1040px;left:24px">commissionStatistic.setExpectedPallets(calculateTotalNumberOfPallets(commissionJous))</p>
<p style="top:1044px;left:24px">commissionStatistic.setExpectedPicks(expectedPicks.longValue())</p>
<p style="top:1048px;left:24px">commissionStatistic.setFullPallets(numOfPalletsFromStore)</p>
<p style="top:1056px;left:24px"><i class="k">return</i> customData</p>
<p style="top:1060px;left:16px">}</p>
<p style="top:1068px;left:16px"><i class="k">int</i> calculateTotalNumberOfPallets(List&lt;NmCommissionJou&gt; commissionJous) {</p>
<p style="top:1072px;left:24px">Set&lt;NmItem&gt; items = commissionJous.stream()</p>
<p style="top:1076px;left:40px">.map(commissionJou -&gt; commissionJou.getItemQuantityUnit().getItem())</p>
<p style="top:1080px;left:40px">.collect(Collectors.toSet())</p>
<p style="top:1088px;left:24px">NeededPalletCalculator neededPalletCalculator = <i class="k">new</i> NeededPalletCalculator(items)</p>
<p style="top:1096px;left:24px"><i class="k">return</i> neededPalletCalculator.calculatePallets(null, commissionJous)</p>
<p style="top:1100px;left:16px">}</p>
<p style="top:1108px;left:16px"><i class="k">private</i> <i class="k">boolean</i> closed(<i class="k">int</i> value, <i class="k">int</i> ... ranges) {</p>
<p style="top:1112px;left:24px"><i class="k">if</i> (ranges.length % <i class="n">2</i> != <i class="n">0</i>) {</p>
<p style="top:1116px;left:32px"><i class="k">throw</i> <i class="k">new</i> IllegalArgumentException(<i class="s">"Wertebereich ungültig."</i>)</p>
<p style="top:1120px;left:24px">}</p>
<p style="top:1128px;left:24px"><i class="k">for</i> (<i class="k">int</i> i = <i class="n">0</i>; i &lt; ranges.length; i += <i class="n">2</i>) {</p>
<p style="top:1132px;left:32px"><i class="k">int</i> lowerBound = ranges[i]</p>
<p style="top:1136px;left:32px"><i class="k">int</i> upperBound = ranges[i + <i class="n">1</i>]</p>
<p style="top:1144px;left:32px"><i class="k">if</i> (value &gt;= lowerBound &amp;&amp; value &lt;= upperBound) {</p>
<p style="top:1148px;left:40px"><i class="k">return</i> <i class="k">true</i></p>
<p style="top:1152px;left:32px">}</p>
<p style="top:1156px;left:24px">}</p>
<p style="top:1164px;left:24px"><i class="k">return</i> <i class="k">false</i></p>
<p style="top:1168px;left:16px">}</p>
<p style="top:1176px;left:16px"><i class="k">private</i> <i class="k">static</i> <i class="k">class</i> Info {</p>
<p style="top:1180px;left:24px"><i class="k">private</i> <i class="k">final</i> <i class="k">boolean</i> istAbholung</p>
<p style="top:1184px;left:24px"><i class="k">private</i> <i class="k">final</i> <i class="k">int</i> anzahlUnterschiedlicheArtikel</p>
<p style="top:1188px;left:24px"><i class="k">private</i> <i class="k">final</i> <i class="k">boolean</i> paketversandMoeglich</p>
<p style="top:1192px;left:24px"><i class="k">private</i> <i class="k">final</i> <i class="k">double</i> overallWeight</p>
<p style="top:1196px;left:24px"><i class="k">private</i> <i class="k">final</i> Set&lt;String&gt; itemCds</p>
<p style="top:1200px;left:24px"><i class="k">private</i> <i class="k">final</i> <i class="k">double</i> overallQuantity</p>
<p style="top:1204px;left:24px"><i class="k">private</i> <i class="k">final</i> List&lt;AggregatedItem&gt; aggregatedCalculationItems</p>
<p style="top:1208px;left:24px"><i class="k">private</i> <i class="k">final</i> List&lt;AggregatedItem&gt; aggregatedHandlingItems</p>
<p style="top:1212px;left:24px"><i class="k">private</i> <i class="k">final</i> Set&lt;String&gt; officeDepartments</p>
<p style="top:1216px;left:24px"><i class="k">private</i> <i class="k">final</i> Set&lt;String&gt; commDepartments</p>
<p style="top:1224px;left:24px">Info(<i class="k">boolean</i> istAbholung,</p>
<p style="top:1228px;left:34px"><i class="k">int</i> anzahlUnterschiedlicheArtikel, <i class="k">boolean</i> paketversandMoeglich, <i class="k">double</i> overallWeight,</p>
<p style="top:1232px;left:34px">Set&lt;String&gt; itemCds, <i class="k">double</i> overallQuantity,</p>
<p style="top:1236px;left:34px">List&lt;AggregatedItem&gt; aggregatedCalculationItems, List&lt;AggregatedItem&gt; aggregatedHandlingItems,</p>
<p style="top:1240px;left:34px">Set&lt;String&gt; officeDepartments, Set&lt;String&gt; commDepartments) {</p>
<p style="top:1248px;left:32px"><i class="k">this</i>.istAbholung = istAbholung</p>
<p style="top:1252px;left:32px"><i class="k">this</i>.anzahlUnterschiedlicheArtikel = anzahlUnterschiedlicheArtikel</p>
<p style="top:1256px;left:32px"><i class="k">this</i>.paketversandMoeglich = paketversandMoeglich</p></div><div id="mmshadow"></div>
  <div id="vscroll"><div></div></div>
 </div>
 <div id="descwrap"><div id="desc"><span>Description</span></div><div id="saveic"><svg width="36.4" height="36.4" viewBox="0 0 24 24"><path fill="#000" d="M17 3H5c-1.11 0-2 .9-2 2v14c0 1.1.89 2 2 2h14c1.1 0 2-.9 2-2V3zm-5 16c-1.66 0-3-1.34-3-3s1.34-3 3-3 3 1.34 3 3-1.34 3-3 3zm3-10H5V5h10v4z"/></svg></div><div id="save">save</div></div>
</div>
<div id="rightbar"><div class="vt" style="top:0">4000000000000001</div>
<div class="vt" style="top:416.5px;letter-spacing:-.3px">Comm-1</div>
<div class="vt" style="top:640.3px;height:319.5px;letter-spacing:1.75px">O-000005,O-000006</div>
<div class="abs" style="left:0;top:1402px;width:98px;height:2px;background:#dcdcdc"></div>
<svg class="abs" style="left:23px;top:1426px;width:48px;height:48px;fill:#1e1e1e" viewBox="0 0 24 24"><path d="M15.41 16.59L10.83 12l4.58-4.59L14 6l-6 6 6 6z"/></svg>
<style>.vt{position:absolute;left:26px;width:44px;writing-mode:vertical-rl;font-size:33px;line-height:44px;color:#787878;letter-spacing:1.75px;white-space:nowrap;overflow:hidden}</style>
</div>
<div id="footer"><svg class="abs" style="left:2080px;top:-34px" width="920" height="90" viewBox="0 0 2576 252">
<g fill="#4a82c3"><circle cx="168" cy="152" r="31"/><path d="M133 205 Q135 178 168 178 Q201 178 204 205 Q204 214 190 216 H147 Q133 214 133 205Z"/></g>
<rect x="568" y="133" width="74" height="56" rx="3" fill="#8a8a8a"/><rect x="575" y="140" width="60" height="42" fill="#4a82c3"/><rect x="596" y="189" width="18" height="12" fill="#8a8a8a"/><rect x="584" y="200" width="42" height="8" fill="#8a8a8a"/>
<path d="M1438 133 A28 28 0 0 1 1466 162 Q1462 185 1438 210 Q1414 185 1410 162 A28 28 0 0 1 1438 133Z" fill="#4a82c3"/><circle cx="1438" cy="161" r="13" fill="#fafafa"/>
<g><rect x="1932" y="122" width="56" height="44" fill="#8a8a8a"/><rect x="1939" y="128" width="42" height="36" fill="#fff"/><g stroke="#4a82c3" stroke-width="3"><path d="M1945 136H1975M1945 143H1975M1945 150H1975M1945 157H1975"/></g>
<rect x="1910" y="164" width="100" height="48" rx="10" fill="#8a8a8a"/><rect x="1926" y="190" width="68" height="14" rx="3" fill="#f3f3f3"/></g>
<circle cx="2183" cy="171" r="56" fill="#80b6a3"/>
<g fill="none" stroke="#86c0b0" stroke-width="7"><rect x="2363" y="126" width="50" height="38" rx="3"/><rect x="2404" y="175" width="50" height="34" rx="3"/><path d="M2388 166V178M2374 180H2400M2429 210V216M2416 217H2442M2380 182V200Q2380 208 2390 208H2402"/></g>
</svg>
<div class="ft" style="left:2168px">develop</div>
<div class="ft" style="left:2320px;letter-spacing:-.78px">TRM-SCANNER-10</div>
<div class="ft" style="left:2619px;letter-spacing:-.5px">LOC-IM</div>
<style>.ft{position:absolute;top:9px;font-size:29.5px;line-height:40px;color:#111;white-space:nowrap}</style>
</div>
<div id="botline"></div>
</div></body></html>
